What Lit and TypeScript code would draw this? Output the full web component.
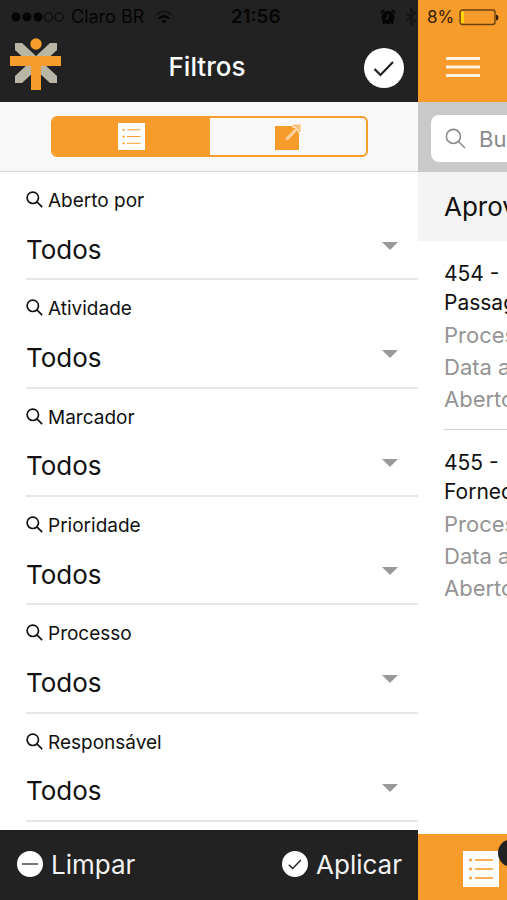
import { LitElement, html, css, svg } from "lit";
import { customElement, state } from "lit/decorators.js";

const ORANGE = "#f79b2b";

const listIcon = (cls: string) => html`
  <svg class=${cls} viewBox="0 0 36 36" aria-hidden="true">
    <rect width="36" height="36" fill="#fff" />
    ${[9, 18, 27].map(
      (y) => svg`<circle cx="7.5" cy=${y} r="1.5" fill=${ORANGE} />
        <path d="M12 ${y}H30" stroke=${ORANGE} stroke-width="1.6" />`
    )}
  </svg>`;

const checkIcon = (cls: string) => html`
  <svg class=${cls} viewBox="0 0 40 40" aria-hidden="true">
    <circle cx="20" cy="20" r="20" fill="#fff" />
    <path d="M10.500 21L16.500 27L29 14" fill="none" stroke="#222" stroke-width="2.200" />
  </svg>`;

const magnifier = (cls: string, width: number) => html`
  <svg class=${cls} viewBox="0 0 20 20" fill="none" stroke="currentColor" stroke-width=${width} aria-hidden="true">
    <circle cx="8" cy="8" r="6.700" />
    <path d="M12.800 12.800L19 19" />
  </svg>`;

interface Task {
  code: string;
  subject: string;
}

@customElement("app-root")
export class AppRoot extends LitElement {
  @state() private filters = ["Aberto por", "Atividade", "Marcador", "Prioridade", "Processo", "Responsável"];
  @state() private tasks: Task[] = [
    { code: "454 -", subject: "Passag" },
    { code: "455 -", subject: "Forned" },
  ];

  static styles = css`
    :host {
      display: flex;
      min-height: 100vh;
      overflow: hidden;
      background: #fff;
      color: #111;
      font-family: Inter, "Noto Sans", sans-serif;
    }
    * {
      box-sizing: border-box;
    }
    button {
      padding: 0;
      border: 0;
      background: none;
      color: inherit;
      font: inherit;
      display: flex;
      align-items: center;
      justify-content: center;
    }
    svg {
      display: block;
      flex: none;
    }
    h1,
    h2,
    h3,
    p {
      margin: 0;
      font-weight: 400;
    }
    .drawer {
      flex: 1;
      min-width: 0;
      display: flex;
      flex-direction: column;
    }
    .page {
      flex: 0 0 89px;
      overflow: hidden;
      display: flex;
      flex-direction: column;
      white-space: nowrap;
    }
    .top {
      height: 102px;
      background: #222;
    }
    .page .top {
      background: #f79b2b;
    }
    .status {
      height: 34px;
      display: flex;
      align-items: center;
      justify-content: space-between;
      padding-left: 11px;
      color: #050505;
      font-size: 18px;
      line-height: 20px;
      white-space: nowrap;
    }
    .carrier,
    .signals {
      display: flex;
      align-items: center;
    }
    .carrier {
      gap: 7px;
    }
    .time {
      font-size: 19px;
      font-weight: 600;
      margin-right: 42px;
    }
    .signals {
      gap: 8px;
    }
    .dots {
      width: 53px;
      height: 10px;
    }
    .wifi {
      width: 18px;
      height: 14px;
      margin-left: 4px;
    }
    .alarm {
      width: 16px;
      height: 16px;
    }
    .bluetooth {
      width: 14px;
      height: 18px;
      opacity: 0.5;
    }
    .page .status {
      justify-content: flex-start;
      gap: 5px;
      padding-left: 9px;
      color: #33200a;
      font-size: 17px;
    }
    .battery {
      width: 40px;
      height: 17px;
    }
    .bar {
      height: 68px;
      display: grid;
      grid-template-columns: 1fr auto 1fr;
      align-items: center;
      padding: 0 14px 0 10px;
      color: #fff;
    }
    .logo {
      width: 52px;
      height: 52px;
      margin-bottom: 8px;
    }
    .bar h1 {
      font-size: 26px;
      line-height: 32px;
      font-weight: 500;
      padding-bottom: 2px;
    }
    .confirm {
      justify-self: end;
    }
    .check-large {
      width: 40px;
      height: 40px;
    }
    .menu {
      height: 66px;
    }
    .burger {
      width: 34px;
      height: 20px;
      margin-left: 28px;
    }
    .switcher {
      height: 70px;
      padding: 0 50px 0 51px;
      display: flex;
      align-items: center;
      background: #f8f8f8;
      border-bottom: 1px solid #d4d4d4;
    }
    .segments {
      flex: 1;
      height: 41px;
      display: flex;
      border: 2px solid #f79b2b;
      border-radius: 6px;
      overflow: hidden;
    }
    .segments button {
      flex: 1;
    }
    .segments .active {
      background: #f79b2b;
    }
    .list-small {
      width: 27px;
      height: 27px;
    }
    .export {
      width: 28px;
      height: 28px;
    }
    .filters {
      flex: 1;
      display: grid;
      grid-auto-rows: 1fr;
      padding: 0 0 8px 26px;
    }
    .filter {
      min-height: 100px;
      border-bottom: 2px solid #e6e6e6;
      padding-top: 16px;
    }
    .filter label {
      display: flex;
      align-items: center;
      gap: 5px;
      font-size: 19px;
      line-height: 26px;
    }
    .glass-small {
      width: 17px;
      height: 17px;
      margin-bottom: 3px;
    }
    .choice {
      display: flex;
      align-items: center;
      height: 44px;
      margin-top: 13px;
    }
    .choice select {
      flex: 1;
      min-width: 0;
      height: 44px;
      padding: 0;
      border: 0;
      background: none;
      appearance: none;
      color: #111;
      font: inherit;
      font-size: 26px;
    }
    .arrow {
      width: 16px;
      height: 8px;
      margin: 0 20px 6px 0;
    }
    .actions {
      height: 70px;
      padding: 0 16px 2px 17px;
      display: flex;
      align-items: center;
      justify-content: space-between;
      background: #222;
      color: #f2f2f2;
      font-size: 26px;
    }
    .actions button {
      gap: 8px;
    }
    .round {
      width: 26px;
      height: 26px;
    }
    .search {
      height: 70px;
      padding: 13px 0 10px 13px;
      background: #c9c9ca;
    }
    .field {
      height: 47px;
      width: 360px;
      display: flex;
      align-items: center;
      gap: 13px;
      padding-left: 14px;
      background: #fff;
      border-radius: 8px;
      color: #8a8a8a;
    }
    .field input {
      flex: 1;
      min-width: 0;
      padding: 0;
      border: 0;
      outline: 0;
      background: none;
      font: inherit;
      font-size: 22px;
    }
    .field input::placeholder {
      color: #8a8a8a;
    }
    .glass {
      width: 21px;
      height: 21px;
    }
    .group {
      height: 69px;
      padding-left: 26px;
      background: #f3f3f3;
      font-size: 26px;
      line-height: 70px;
    }
    .tasks {
      flex: 1;
      padding-left: 26px;
    }
    .task {
      padding: 18px 0 14px;
      border-bottom: 1px solid #d2d2d2;
    }
    .task:last-child {
      border: 0;
    }
    .task h3 {
      margin-bottom: 2px;
      font-size: 21px;
      line-height: 29px;
    }
    .task p {
      color: #949494;
      font-size: 22px;
      line-height: 32px;
    }
    .tabs {
      height: 66px;
      padding: 4px 0 0 45px;
      display: flex;
      align-items: center;
      background: #f79b2b;
    }
    .tab {
      position: relative;
    }
    .list-large {
      width: 36px;
      height: 36px;
    }
    .badge {
      position: absolute;
      left: 35px;
      top: -12px;
      width: 28px;
      height: 28px;
      border-radius: 50%;
      background: #222;
    }
  `;

  private renderStatusLeft() {
    return html`
      <div class="status">
        <div class="carrier">
          <svg class="dots" viewBox="0 0 53 10" aria-hidden="true">
            ${[5, 16, 27].map((x) => svg`<circle cx=${x} cy="5" r="4.500" fill="#050505" />`)}
            ${[37.5, 48].map((x) => svg`<circle cx=${x} cy="5" r="4.200" fill="none" stroke="#050505" />`)}
          </svg>
          <span>Claro BR</span>
          <svg class="wifi" viewBox="0 0 18 14" fill="none" stroke="#050505" stroke-width="2.300" aria-hidden="true">
            <path d="M1 5Q9 -2 17 5" opacity="0.400" />
            <path d="M4 8.500Q9 4 14 8.500" />
            <path d="M6.500 11Q9 8.500 11.500 11L9 13.800Z" fill="#050505" stroke="none" />
          </svg>
        </div>
        <span class="time">21:56</span>
        <div class="signals">
          <svg class="alarm" viewBox="0 0 16 16" aria-hidden="true">
            <circle cx="8" cy="8.500" r="6.500" fill="#050505" />
            <path d="M1 4L4 1M15 4L12 1M3 15L4.500 13M13 15L11.500 13" stroke="#050505" stroke-width="2" />
            <path d="M8 5V9L5.500 10" fill="none" stroke="#333" />
          </svg>
          <svg class="bluetooth" viewBox="0 0 14 18" fill="none" stroke="#050505" stroke-width="1.500" aria-hidden="true">
            <path d="M2 5L11 13L7 17V1L11 5L2 13" />
          </svg>
        </div>
      </div>`;
  }

  private renderDrawer() {
    return html`
      <section class="drawer">
        <header class="top">
          ${this.renderStatusLeft()}
          <div class="bar">
            <svg class="logo" viewBox="0 0 52 52" role="img" aria-label="Logo">
              <path
                d="M5 5H12L26 18L40 5H47V12L33 25L47 38V45H40L26 32L12 45H5V38L19 25L5 12Z"
                fill="#b9b6a6"
              />
              <circle cx="26" cy="6" r="7" fill="#222" />
              <circle cx="26" cy="6" r="5.700" fill="#f79b2b" />
              <path d="M0 18H51V28H31V52H21V28H0Z" fill="#f79b2b" />
            </svg>
            <h1>Filtros</h1>
            <button class="confirm" aria-label="Confirmar">${checkIcon("check-large")}</button>
          </div>
        </header>
        <div class="switcher">
          <div class="segments">
            <button class="active" aria-label="Lista">${listIcon("list-small")}</button>
            <button aria-label="Abrir">
              <svg class="export" viewBox="0 0 28 28" aria-hidden="true">
                <rect x="1" y="3" width="24" height="24" fill="#f79b2b" />
                <path
                  d="M12 15.500L22.500 5L18.500 4V1H27V9.500H24.500L23.500 6L13.500 17Z"
                  fill="#f8c27e"
                  stroke="#fff"
                  stroke-width="0.800"
                />
              </svg>
            </button>
          </div>
        </div>
        <div class="filters">
          ${this.filters.map(
            (name, i) => html`
              <div class="filter">
                <label for="filter-${i}">${magnifier("glass-small", 2)}${name}</label>
                <div class="choice">
                  <select id="filter-${i}">
                    <option>Todos</option>
                  </select>
                  <svg class="arrow" viewBox="0 0 16 8" aria-hidden="true"><path d="M0 0H16L8 8Z" fill="#999" /></svg>
                </div>
              </div>`
          )}
        </div>
        <footer class="actions">
          <button>
            <svg class="round" viewBox="0 0 26 26" aria-hidden="true">
              <circle cx="13" cy="13" r="13" fill="#fff" />
              <path d="M5 13H21" stroke="#777" stroke-width="2" />
            </svg>
            Limpar
          </button>
          <button>${checkIcon("round")}Aplicar</button>
        </footer>
      </section>`;
  }

  private renderPage() {
    return html`
      <main class="page">
        <header class="top">
          <div class="status">
            <span>8%</span>
            <svg class="battery" viewBox="0 0 40 17" aria-hidden="true">
              <rect x="1" y="1" width="35" height="14.500" rx="2.500" fill="none" stroke="#6b4310" stroke-width="1.400" />
              <rect x="2" y="2.500" width="3" height="11.500" fill="#ffd400" />
              <path d="M37 5.500Q39.500 6 39.500 8.500T37 11.500Z" fill="#33200a" />
            </svg>
          </div>
          <button class="menu" aria-label="Menu">
            <svg class="burger" viewBox="0 0 34 20" aria-hidden="true">
              <path d="M0 1.500H34M0 10H34M0 18.500H34" stroke="#fff3e0" stroke-width="3" />
            </svg>
          </button>
        </header>
        <div class="search">
          <div class="field">
            ${magnifier("glass", 1.5)}
            <input type="search" placeholder="Bu" aria-label="Buscar" />
          </div>
        </div>
        <h2 class="group">Aprov</h2>
        <div class="tasks">
          ${this.tasks.map(
            (t) => html`
              <article class="task">
                <h3>${t.code}<br />${t.subject}</h3>
                <p>Proces</p>
                <p>Data a</p>
                <p>Aberto</p>
              </article>`
          )}
        </div>
        <nav class="tabs">
          <button class="tab" aria-label="Tarefas">${listIcon("list-large")}<span class="badge"></span></button>
        </nav>
      </main>`;
  }

  render() {
    return html`${this.renderDrawer()}${this.renderPage()}`;
  }
}
